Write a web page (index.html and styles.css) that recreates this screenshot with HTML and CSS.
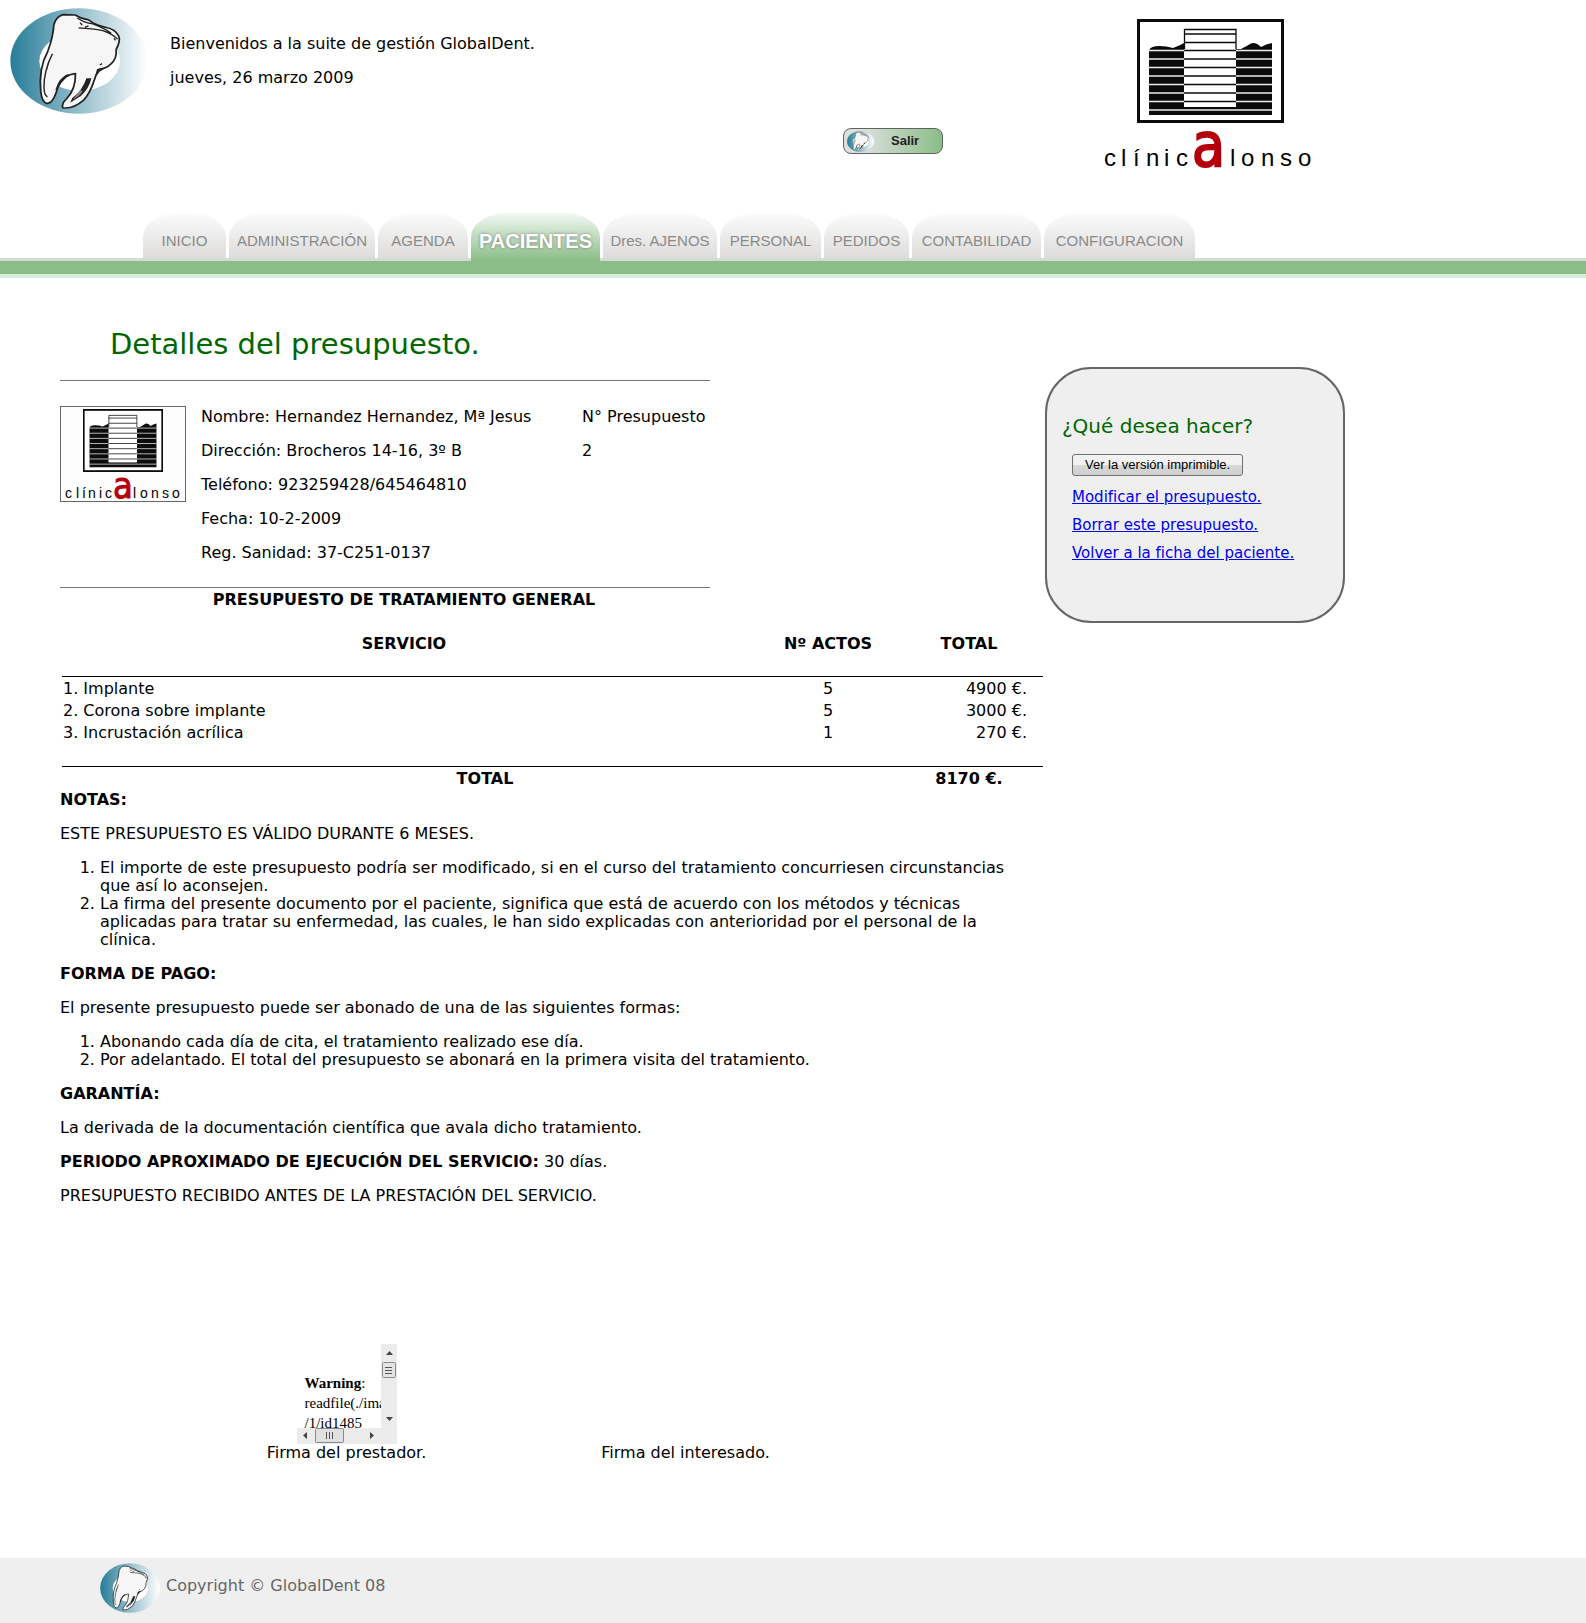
FILE: index.html
```html
<!DOCTYPE html>
<html lang="es">
<head>
<meta charset="utf-8">
<title>GlobalDent - Detalles del presupuesto</title>
<link rel="stylesheet" href="styles.css">
</head>
<body>
<svg class="defs" aria-hidden="true">
  <defs>
    <linearGradient id="teal" x1="0" x2="1" y1="0" y2="0">
      <stop offset="0" stop-color="#267d98"/>
      <stop offset="0.4" stop-color="#7fb1c2"/>
      <stop offset="1" stop-color="#ffffff"/>
    </linearGradient>
    <symbol id="tooth" viewBox="28 22 390 320" preserveAspectRatio="none">
      <ellipse cx="223" cy="182" rx="194" ry="159" fill="url(#teal)"/>
      <ellipse cx="225" cy="183" rx="114" ry="89" fill="#fff"/>
      <path d="M178 42L212 43Q230 55 250 58Q268 74 300 81Q325 86 335 106Q341 122 328 147Q331 176 312 192Q302 204 280 207Q272 220 266 240Q254 280 236 300Q206 328 177 323Q173 310 188 296Q214 268 213 220Q180 222 163 262Q150 312 132 310Q118 306 115 275Q108 205 135 152Q150 110 152 72Q158 48 178 42Z" fill="#f6f6f6" stroke="#222" stroke-width="5" stroke-linejoin="round"/>
      <path d="M218 52Q238 66 262 70Q296 84 314 98M222 82Q262 84 290 90Q318 100 332 116M226 66L232 74M240 80L250 76M322 114L326 120M282 194L288 190" fill="none" stroke="#222" stroke-width="4"/>
      <path d="M148 160Q124 210 124 260Q124 286 134 290" fill="none" stroke="#222" stroke-width="4"/>
      <path d="M146 164L134 190L132 212Q136 190 146 164ZM244 234L258 234Q252 264 228 288L198 308L204 294Q232 272 244 234ZM274 206L300 202L282 214L268 232ZM190 222Q166 232 156 270L162 268Q172 236 196 224Z" fill="#222"/>
      <path d="M206 298Q222 292 234 272L226 270Q216 284 206 298Z" fill="#888"/>
    </symbol>
    <symbol id="building" viewBox="0 0 147 104" preserveAspectRatio="none">
      <rect x="1.5" y="1.5" width="144" height="101" fill="#fff" stroke="#0b0b0b" stroke-width="3"/>
      <path d="M12 96V31Q14 27 22 27Q30 27 36 29Q44 26 47 24V96ZM99 96V30H104Q110 27 113 25Q118 22 124 28Q129 25 135 24V96ZM12 88H135V96H12Z" fill="#0b0b0b"/>
      <path d="M12 31.500H47M12 40H47M12 48.500H47M12 57H47M12 65.500H47M12 74H47M12 82.500H47M12 91H135M99 31.500H135M99 40H135M99 48.500H135M99 57H135M99 65.500H135M99 74H135M99 82.500H135" stroke="#eee" stroke-width="1.300"/>
      <path d="M47.500 88V10.500H99V88Z" fill="#fff"/>
      <path d="M47.500 30V10.500H99V30M47 15H99M47 23.500H99M47 31.500H99M47 40H99M47 48.500H99M47 57H99M47 65.500H99M47 74H99M47 82.500H99" fill="none" stroke="#0b0b0b" stroke-width="1.300"/>
    </symbol>
  </defs>
</svg>

<header class="header">
  <svg class="brand" aria-hidden="true"><use href="#tooth"/></svg>
  <div class="welcome">
    <p>Bienvenidos a la suite de gestión GlobalDent.</p>
    <p>jueves, 26 marzo 2009</p>
  </div>
  <button class="exit" type="button"><svg class="exit-icon" aria-hidden="true"><use href="#tooth"/></svg><span>Salir</span></button>
  <svg class="clinic" viewBox="0 0 220 160">
    <use href="#building" x="37" y="1" width="147" height="104"/>
    <text class="clinic-word" y="148" x="4 21 33 46 64 76">clínic</text>
    <text class="clinic-a" y="148" x="92">a</text>
    <text class="clinic-word" y="148" x="130 141 161 180 198">lonso</text>
  </svg>
</header>

<nav class="nav">
  <a class="tab" style="width:83px" href="#">INICIO</a>
  <a class="tab" style="width:146px" href="#">ADMINISTRACIÓN</a>
  <a class="tab" style="width:90px" href="#">AGENDA</a>
  <a class="tab active" style="width:129px" href="#">PACIENTES</a>
  <a class="tab" style="width:114px" href="#">Dres. AJENOS</a>
  <a class="tab" style="width:101px" href="#">PERSONAL</a>
  <a class="tab" style="width:85px" href="#">PEDIDOS</a>
  <a class="tab" style="width:129px" href="#">CONTABILIDAD</a>
  <a class="tab" style="width:151px" href="#">CONFIGURACION</a>
</nav>

<div class="page">
  <main class="main">
    <h1>Detalles del presupuesto.</h1>
    <section class="patient">
      <svg class="stamp" viewBox="0 0 124 94">
        <use href="#building" x="22" y="2" width="80" height="63"/>
        <text class="stamp-word" y="91" x="4 15 21 27 38 44">clínic</text>
        <text class="stamp-a" y="91" x="52">a</text>
        <text class="stamp-word" y="91" x="72 79 90 101 111">lonso</text>
      </svg>
      <div class="patient-data">
        <p>Nombre: Hernandez Hernandez, Mª Jesus</p>
        <p>Dirección: Brocheros 14-16, 3º B</p>
        <p>Teléfono: 923259428/645464810</p>
        <p>Fecha: 10-2-2009</p>
        <p>Reg. Sanidad: 37-C251-0137</p>
      </div>
      <div class="number">
        <p>N° Presupuesto</p>
        <p>2</p>
      </div>
    </section>

    <table class="services">
      <colgroup><col><col class="col-acts"><col class="col-total"><col class="col-end"></colgroup>
      <thead>
        <tr><th>PRESUPUESTO DE TRATAMIENTO GENERAL</th></tr>
        <tr class="titles"><th>SERVICIO</th><th>Nº ACTOS</th><th>TOTAL</th></tr>
        <tr><td class="rule" colspan="4"></td></tr>
      </thead>
      <tbody>
        <tr><td>1. Implante</td><td class="acts">5</td><td class="amount">4900 €.</td></tr>
        <tr><td>2. Corona sobre implante</td><td class="acts">5</td><td class="amount">3000 €.</td></tr>
        <tr><td>3. Incrustación acrílica</td><td class="acts">1</td><td class="amount">270 €.</td></tr>
      </tbody>
      <tfoot>
        <tr><td class="rule" colspan="4"></td></tr>
        <tr><th colspan="2">TOTAL</th><th>8170 €.</th></tr>
      </tfoot>
    </table>

    <section class="notes">
      <p><b>NOTAS:</b></p>
      <p>ESTE PRESUPUESTO ES VÁLIDO DURANTE 6 MESES.</p>
      <ol>
        <li>El importe de este presupuesto podría ser modificado, si en el curso del tratamiento concurriesen circunstancias que así lo aconsejen.</li>
        <li>La firma del presente documento por el paciente, significa que está de acuerdo con los métodos y técnicas aplicadas para tratar su enfermedad, las cuales, le han sido explicadas con anterioridad por el personal de la clínica.</li>
      </ol>
      <p><b>FORMA DE PAGO:</b></p>
      <p>El presente presupuesto puede ser abonado de una de las siguientes formas:</p>
      <ol>
        <li>Abonando cada día de cita, el tratamiento realizado ese día.</li>
        <li>Por adelantado. El total del presupuesto se abonará en la primera visita del tratamiento.</li>
      </ol>
      <p><b>GARANTÍA:</b></p>
      <p>La derivada de la documentación científica que avala dicho tratamiento.</p>
      <p><b>PERIODO APROXIMADO DE EJECUCIÓN DEL SERVICIO:</b> 30 días.</p>
      <p>PRESUPUESTO RECIBIDO ANTES DE LA PRESTACIÓN DEL SERVICIO.</p>
    </section>

    <section class="signatures">
      <div class="signature">
        <div class="frame">
          <div class="frame-text"><b>Warning</b>:<br>readfile(./imagenes<br>/1/id1485</div>
          <svg class="bar-v" viewBox="0 0 16 84" aria-hidden="true">
            <rect width="16" height="84" fill="#ececec"/>
            <path d="M5 11L8.500 7L12 11ZM5 73H12L8.500 77Z" fill="#444"/>
            <rect x="1.500" y="18.500" width="13" height="15" rx="1" fill="#e4e4e4" stroke="#888"/>
            <path d="M4 23.500H11M4 26.500H11M4 29.500H11" stroke="#555"/>
          </svg>
          <svg class="bar-h" viewBox="0 0 100 16" aria-hidden="true">
            <rect width="100" height="16" fill="#ececec"/>
            <path d="M10 4V11L6 7.500ZM73 4L77 7.500L73 11Z" fill="#444"/>
            <rect x="18.500" y="0.500" width="28" height="14" rx="1" fill="#e0e0e0" stroke="#888"/>
            <path d="M29.500 4V11M32.500 4V11M35.500 4V11" stroke="#555"/>
          </svg>
        </div>
        <span>Firma del prestador.</span>
      </div>
      <div class="signature"><span>Firma del interesado.</span></div>
    </section>
  </main>

  <aside class="actions">
    <h2>¿Qué desea hacer?</h2>
    <button class="print" type="button">Ver la versión imprimible.</button>
    <a href="#">Modificar el presupuesto.</a>
    <a href="#">Borrar este presupuesto.</a>
    <a href="#">Volver a la ficha del paciente.</a>
  </aside>
</div>

<footer class="footer">
  <svg class="footer-logo" aria-hidden="true"><use href="#tooth"/></svg>
  <p>Copyright © GlobalDent 08</p>
</footer>
</body>
</html>
```

FILE: styles.css
```css
body {
  margin: 0;
  min-height: 100vh;
  display: flex;
  flex-direction: column;
  background: #fff;
  color: #000;
  font: 16px/18px Verdana, "DejaVu Sans", sans-serif;
}

p {
  margin: 0 0 16px;
}

.defs {
  position: absolute;
  width: 0;
  height: 0;
}

/* Header */
.header {
  display: flex;
  align-items: flex-start;
  height: 205px;
  padding: 8px 10px 0;
}

.brand {
  width: 138px;
  height: 106px;
}

.welcome {
  width: 673px;
  margin-left: 22px;
  padding-top: 27px;
}

.exit {
  display: flex;
  align-items: center;
  width: 100px;
  height: 26px;
  margin-top: 120px;
  padding: 0 3px;
  gap: 17px;
  border: 1px solid #5d665d;
  border-radius: 8px;
  background: linear-gradient(90deg, #dcdfdc 20%, #8abd87);
  color: #222;
  font: bold 13px/18px "Liberation Sans", Arial, sans-serif;
}

.exit-icon {
  width: 27px;
  height: 21px;
}

.clinic {
  width: 220px;
  height: 160px;
  margin: 10px 0 0 157px;
  overflow: visible;
}

.clinic-word {
  font: 24px "Liberation Sans", Arial, sans-serif;
}

.clinic-a {
  font: 60px "DejaVu Sans Condensed", "DejaVu Sans", sans-serif;
  fill: #b5000c;
  stroke: #b5000c;
  stroke-width: 2px;
}

/* Navigation */
.nav {
  display: flex;
  align-items: flex-start;
  gap: 3px;
  height: 70px;
  padding-left: 143px;
  background: linear-gradient(#d5ddd3 0 3px, #8abd87 3px 16px, #d9ead8 16px 20px, #fff 20px) 0 45px no-repeat;
}

.tab {
  box-sizing: border-box;
  height: 45px;
  padding-top: 19px;
  border-radius: 36px 36px 0 0 / 24px 24px 0 0;
  background: linear-gradient(#fcfcfc, #dddcdb);
  color: #8a8a8a;
  font: 15px/18px "Liberation Sans", Arial, sans-serif;
  text-align: center;
  text-decoration: none;
  white-space: nowrap;
}

.tab.active {
  height: 48px;
  background: linear-gradient(#f3f9f3, #8abd87);
  color: #fff;
  font-size: 20px;
  font-weight: bold;
  text-shadow: 0 0 3px #777;
}

/* Page */
.page {
  display: grid;
  grid-template-columns: minmax(0, 985px) 300px;
  align-items: start;
  padding: 43px 60px 94px;
}

h1 {
  margin: 0 0 18px;
  padding-left: 50px;
  color: #060;
  font-size: 29px;
  font-weight: normal;
  line-height: 36px;
}

.patient {
  display: grid;
  grid-template-columns: 126px 396px 1fr;
  max-width: 650px;
  padding: 25px 0 9px;
  border: solid #777;
  border-width: 1px 0;
}

.stamp {
  width: 124px;
  height: 94px;
  border: 1px solid #666;
  background: #fdfdfd;
  overflow: visible;
}

.stamp-word {
  font: 14px "Liberation Sans Narrow", "Liberation Sans", Arial, sans-serif;
}

.stamp-a {
  font: 36px "DejaVu Sans Condensed", "DejaVu Sans", sans-serif;
  fill: #b5000c;
  stroke: #b5000c;
  stroke-width: 1px;
}

.patient-data {
  padding: 2px 0 0 15px;
}

.number {
  padding-top: 2px;
}

/* Services */
.services {
  width: 100%;
  table-layout: fixed;
  border-spacing: 2px;
  line-height: 18px;
}

.services td,
.services th {
  padding: 1px;
}

.col-acts {
  width: 160px;
}

.col-total {
  width: 118px;
}

.col-end {
  width: 13px;
}

.services .titles th {
  padding: 23px 0 0;
}

.services .rule {
  height: 21px;
  padding: 0;
  border-bottom: 1px solid #000;
}

.acts {
  text-align: center;
}

.services .amount {
  text-align: right;
}

.notes ol {
  margin: 16px 0;
  padding: 0 20px 0 40px;
}

/* Signatures */
.signatures {
  display: grid;
  grid-template-columns: 339px 339px;
  align-items: end;
  margin: 139px 0 0 117px;
}

.signature {
  display: flex;
  flex-direction: column;
  align-items: center;
}

.frame {
  display: grid;
  grid-template-columns: 84px 16px;
  grid-template-rows: 84px 16px;
}

.frame-text {
  overflow: hidden;
  padding: 29px 0 0 8px;
  font: 15px/20px "Liberation Serif", "Times New Roman", serif;
  white-space: nowrap;
}

.bar-v {
  width: 16px;
  height: 84px;
}

.bar-h {
  grid-column: 1 / 3;
  width: 100px;
  height: 16px;
}

/* Side panel */
.actions {
  display: flex;
  flex-direction: column;
  align-items: flex-start;
  gap: 10px;
  box-sizing: border-box;
  min-height: 256px;
  margin-top: 41px;
  padding: 45px 15px;
  border: 2px solid #666;
  border-radius: 46px;
  background: #efefef;
  font-size: 15px;
}

.actions h2 {
  margin: 0 0 6px;
  color: #060;
  font-size: 20px;
  font-weight: normal;
  line-height: 24px;
}

.actions a {
  margin-left: 10px;
  color: #00e;
}

.print {
  height: 22px;
  margin: 0 0 2px 10px;
  padding: 0 12px;
  border: 1px solid #707070;
  border-radius: 3px;
  background: linear-gradient(#f2f2f2 50%, #d8d8d8 50%, #cfcfcf);
  color: #000;
  font: 13px/18px "Liberation Sans", Arial, sans-serif;
}

/* Footer */
.footer {
  display: flex;
  align-items: flex-start;
  gap: 6px;
  box-sizing: border-box;
  height: 65px;
  margin-top: auto;
  padding: 5px 100px 0;
  background: #efefef;
  color: #666;
}

.footer-logo {
  width: 60px;
  height: 50px;
}

.footer p {
  margin: 14px 0 0;
}
```
